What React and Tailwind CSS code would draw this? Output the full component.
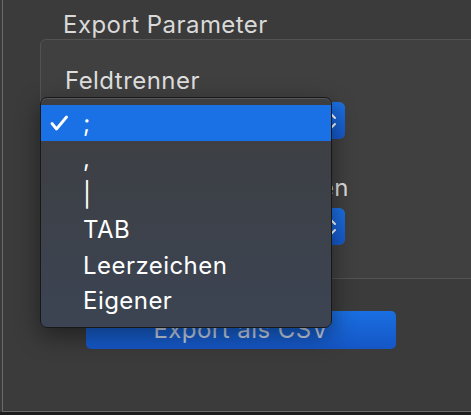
import React from 'react';

const items = [';', ',', '|', 'TAB', 'Leerzeichen', 'Eigener'];

const Check = () => (
	<svg width="18" height="16" viewBox="0 0 18 16" fill="none">
		<path
			d="M2 8.5 L6.5 14 L16.5 2"
			stroke="white"
			strokeWidth="2.8"
			strokeLinecap="round"
			strokeLinejoin="round"
		/>
	</svg>
);

const Chevrons = () => (
	<svg width="12" height="20" viewBox="0 0 12 20" fill="none">
		<path d="M2 7 L6 3 L10 7" stroke="white" strokeWidth="2" strokeLinecap="round" strokeLinejoin="round" />
		<path d="M2 13 L6 17 L10 13" stroke="white" strokeWidth="2" strokeLinecap="round" strokeLinejoin="round" />
	</svg>
);

// Popup-Button (nur der blaue Teil rechts ist sichtbar)
const PopupButton = () => (
	<div className="ml-[22px] w-[280px] h-[37px] flex rounded-[6px] bg-[#5b5b5b] overflow-hidden">
		<div className="flex-1" />
		<div className="w-[28px] h-full bg-gradient-to-b from-[#1c70e4] to-[#1559c9] flex items-center justify-center">
			<Chevrons />
		</div>
	</div>
);

export default function App() {
	return (
		<div className="w-[471px] h-[415px] bg-[#1d1d1d] overflow-hidden relative font-['Inter','Liberation_Sans',sans-serif] tracking-[0.45px]">
			<div className="h-[412px] bg-[#3b3b3b] pl-[2px]">
				<div className="h-full border-l border-b border-[#6a6a6a] overflow-hidden">
					{/* Titel */}
					<div className="pt-[10px] pl-[60px] text-[24px] leading-[29px] text-[#d9d9d9]">
						Export Parameter
					</div>

					{/* Gruppenbox */}
					<div className="ml-[37px] w-[460px] h-[240px] rounded-[6px] border border-[#535353] bg-[#404040] pt-[26px] pl-[24px]">
						<div className="text-[24px] leading-[29px] text-[#dedede]">Feldtrenner</div>
						<div className="mt-[7px] -ml-[24px] pl-[2px]">
							<PopupButton />
						</div>
						<div className="mt-[34px] w-[284px] flex justify-end overflow-hidden whitespace-nowrap text-[24px] leading-[29px] text-[#dedede]">
							Dezimaltrennzeichen
						</div>
						<div className="mt-[6px] -ml-[24px] pl-[2px]">
							<PopupButton />
						</div>
					</div>

					{/* Export Button */}
					<div className="mt-[32px] ml-[83px] w-[310px] h-[38px] rounded-[5px] bg-gradient-to-b from-[#1a6fe2] to-[#1556c6] flex items-center justify-center text-[24px] text-[#c9d3e6]">
						Export als CSV
					</div>
				</div>
			</div>

			{/* Menü */}
			<div className="absolute left-[40px] top-[97px] w-[292px] h-[231px] rounded-[7px] border border-[#181818] bg-gradient-to-b from-[#3d3e40] to-[#3c4453] shadow-[inset_0_1px_0_rgba(255,255,255,0.12),0_8px_24px_rgba(0,0,0,0.45)] pt-[7px] overflow-hidden">
				{items.map((item, idx) => (
					<div
						key={idx}
						className={`h-[35.5px] flex items-center text-[24px] leading-[29px] text-white ${
							idx === 0 ? 'bg-[#1a71e5]' : ''
						}`}
					>
						<div className="w-[42px] pl-[9px] flex items-center">
							{idx === 0 && <Check />}
						</div>
						<span className="pt-[1px]">{item}</span>
					</div>
				))}
			</div>
		</div>
	);
}
